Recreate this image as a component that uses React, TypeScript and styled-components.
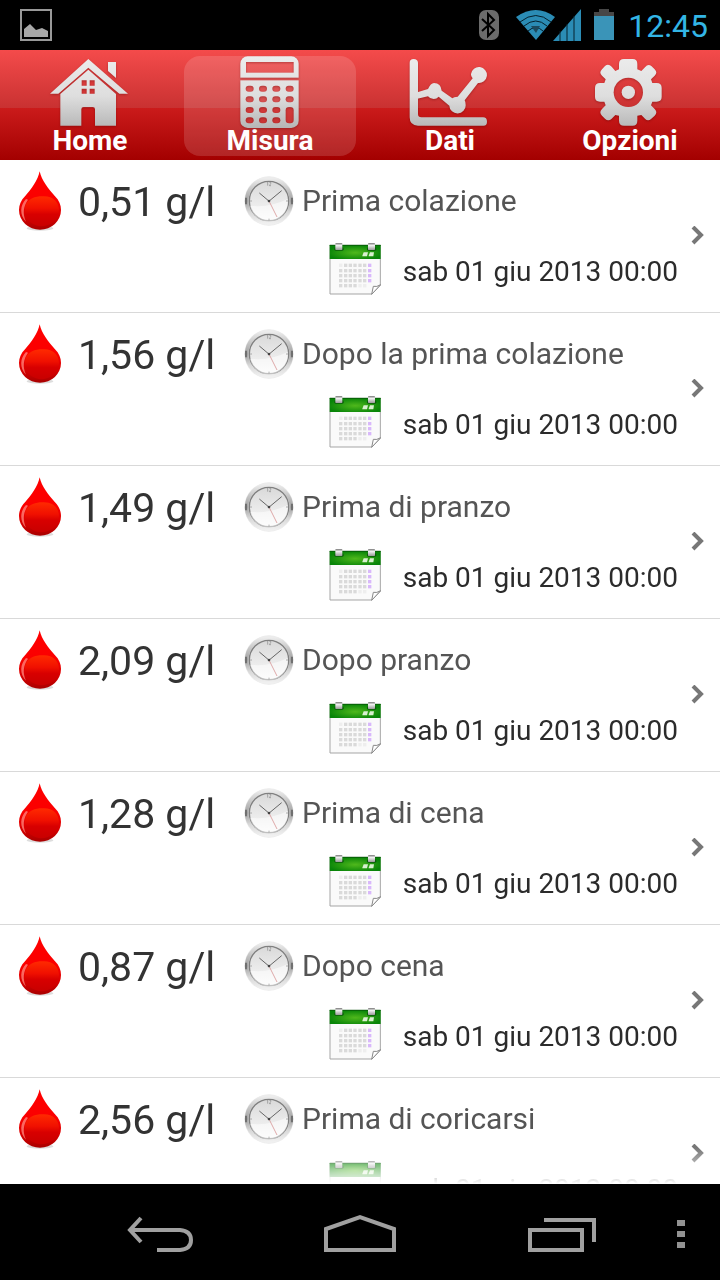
import React from 'react';
import styled, { createGlobalStyle } from 'styled-components';

const GlobalStyle = createGlobalStyle`
  * { box-sizing: border-box; }
  body {
    margin: 0;
    background: #fff;
    font-family: Roboto, "Liberation Sans", sans-serif;
  }
`;

const Screen = styled.div`
  display: flex;
  flex-direction: column;
  height: 100vh;
  background: #fff;
`;

const StatusBar = styled.header`
  flex: none;
  display: flex;
  align-items: center;
  height: 50px;
  padding: 0 12px 0 18px;
  background: #000;
`;

const StatusIcons = styled.div`
  display: flex;
  align-items: center;
  gap: 12px;
  margin-left: auto;
`;

const Time = styled.time`
  padding: 2px 0 0 2px;
  color: #33b5e5;
  font-size: 32px;
  line-height: 40px;
`;

const TabBar = styled.nav`
  flex: none;
  display: grid;
  grid-template-columns: repeat(4, 1fr);
  gap: 8px;
  padding: 6px 4px 4px;
  background:
    linear-gradient(to bottom, #f44b4b 0, #c93131 58px, #cb1b1b 58px, #a30000 100%);
`;

const Tab = styled.button<{ $active?: boolean }>`
  display: flex;
  flex-direction: column;
  align-items: center;
  padding: 0 0 2px;
  border: 0;
  border-radius: 16px;
  background: ${(p) => (p.$active ? 'rgba(255, 255, 255, 0.14)' : 'transparent')};
  color: #fff;
  font: 700 28px/26px Roboto, "Liberation Sans", sans-serif;
`;

const TabIcon = styled.svg`
  width: 84px;
  height: 72px;
  filter: drop-shadow(0 1px 1px rgba(80, 0, 0, 0.35));
`;

const List = styled.ul`
  flex: 1;
  min-height: 0;
  margin: 0;
  padding: 0;
  overflow-y: auto;
  scrollbar-width: none;
  list-style: none;
  mask-image: linear-gradient(to top, transparent 0, #000 36px);
`;

const Row = styled.a`
  display: flex;
  align-items: center;
  height: 153px;
  padding: 0 16px 0 18px;
  border-bottom: 1px solid #d9d9d9;
  color: #333;
  text-decoration: none;
`;

const Details = styled.div`
  flex: 1;
  display: flex;
  flex-direction: column;
  gap: 8px;
  padding-bottom: 2px;
`;

const Line = styled.div<{ $end?: boolean }>`
  display: flex;
  align-items: center;
  justify-content: ${(p) => (p.$end ? 'flex-end' : 'flex-start')};
  height: 60px;
  padding-right: ${(p) => (p.$end ? '12px' : '0')};
`;

const Value = styled.strong`
  width: 182px;
  padding: 2px 0 0 16px;
  font-size: 41px;
  font-weight: 400;
  line-height: 48px;
`;

const Meal = styled.span`
  padding-left: 8px;
  color: #555;
  font-size: 30px;
  line-height: 36px;
`;

const DateText = styled.time`
  padding: 6px 0 0 22px;
  color: #2b2b2b;
  font-size: 28px;
  line-height: 36px;
`;

const SystemBar = styled.footer`
  flex: none;
  display: flex;
  height: 96px;
  padding-left: 60px;
  background: #000;
`;

const SystemButton = styled.button<{ $narrow?: boolean }>`
  flex: ${(p) => (p.$narrow ? '0 0 60px' : '1')};
  display: flex;
  align-items: center;
  justify-content: center;
  padding: ${(p) => (p.$narrow ? '4px 18px 0 0' : '4px 0 0')};
  border: 0;
  background: none;
`;

const Sprite = styled.svg`
  position: absolute;
  width: 0;
  height: 0;
`;

const Paints = () => (
  <Sprite aria-hidden="true">
    <defs>
      <linearGradient id="metal" gradientUnits="userSpaceOnUse" x1="0" y1="170" x2="0" y2="384">
        <stop offset="0" stopColor="#ececec" />
        <stop offset="0.55" stopColor="#dedede" />
        <stop offset="1" stopColor="#b6b6b6" />
      </linearGradient>
      <linearGradient id="blood" x1="0" y1="0" x2="0" y2="1">
        <stop offset="0" stopColor="#f00" />
        <stop offset="0.5" stopColor="#fa0000" />
        <stop offset="0.8" stopColor="#d40000" />
        <stop offset="1" stopColor="#a80000" />
      </linearGradient>
      <linearGradient id="gloss" x1="0" y1="0" x2="0" y2="1">
        <stop offset="0" stopColor="#ff2a00" />
        <stop offset="0.4" stopColor="#f01000" />
        <stop offset="0.6" stopColor="#d80000" />
        <stop offset="1" stopColor="#c80000" />
      </linearGradient>
      <linearGradient id="rim" x1="0" y1="0" x2="0" y2="1">
        <stop offset="0" stopColor="#ececec" />
        <stop offset="0.25" stopColor="#c6c6c6" />
        <stop offset="0.5" stopColor="#a2a2a2" />
        <stop offset="0.75" stopColor="#d8d8d8" />
        <stop offset="1" stopColor="#f0f0f0" />
      </linearGradient>
      <linearGradient id="face" x1="0" y1="0" x2="0" y2="1">
        <stop offset="0" stopColor="#d9d9d9" />
        <stop offset="0.6" stopColor="#ececec" />
        <stop offset="1" stopColor="#fafafa" />
      </linearGradient>
      <radialGradient id="leaf" cx="0.5" cy="0.55" r="0.55">
        <stop offset="0" stopColor="#4fb81c" />
        <stop offset="1" stopColor="#088408" />
      </radialGradient>
      <linearGradient id="clip" x1="0" y1="0" x2="0" y2="1">
        <stop offset="0" stopColor="#777" />
        <stop offset="0.35" stopColor="#f0f0f0" />
        <stop offset="1" stopColor="#999" />
      </linearGradient>
    </defs>
  </Sprite>
);

const HomeIcon = () => (
  <TabIcon viewBox="144 168 252 216" fill="url(#metal)" aria-hidden="true">
    <path d="M265 177 384 281H358L265 203 175 281H150Z" />
    <path d="M324 186H348V234L324 213Z" />
    <path
      fillRule="evenodd"
      d="M265 209 348 282V377H285V328Q285 321 278 321H251Q244 321 244 328V377H181V282Z M245 241V257H260V241Z M269 241V257H284V241Z M245 266V281H260V266Z M269 266V281H284V266Z"
    />
  </TabIcon>
);

const CalculatorIcon = () => (
  <TabIcon viewBox="684 168 252 216" fill="url(#metal)" aria-hidden="true">
    <mask id="keys" maskUnits="userSpaceOnUse" x="684" y="168" width="252" height="216">
      <rect x="684" y="168" width="252" height="216" fill="#fff" />
      <g fill="#000">
        <rect x="738" y="186" width="143" height="32" />
        <rect x="718" y="233" width="182" height="8" />
        {[266, 298, 330, 361].map((y) =>
          [749, 789, 829, 869].map((x) =>
            x === 869 && y > 300 ? null : <rect key={`${x}-${y}`} x={x - 12} y={y - 9} width="24" height="18" rx="9" />,
          ),
        )}
        <rect x="857" y="321" width="24" height="49" rx="10" />
      </g>
    </mask>
    <rect x="721" y="169" width="175" height="215" rx="22" mask="url(#keys)" />
  </TabIcon>
);

const ChartIcon = () => (
  <TabIcon viewBox="144 168 252 216" fill="url(#metal)" aria-hidden="true">
    <path d="M149 188Q149 177 161 177T174 188V342Q174 352 184 352H369Q381 352 381 365T369 377H174Q149 377 149 352Z" />
    <path d="M172 277 204 267Q212 249 222 249 243 250 245 272L277 295Q281 291 293 290L338 235Q332 228 333 222A24 24 0 1 1 354 249L314 301Q317 306 317 315A24 24 0 0 1 268 317L236 290Q230 297 221 297 210 297 204 289L172 296Z" />
  </TabIcon>
);

const GearIcon = () => (
  <TabIcon viewBox="684 168 252 216" fill="url(#metal)" aria-hidden="true">
    <mask id="hub" maskUnits="userSpaceOnUse" x="684" y="168" width="252" height="216">
      <rect x="684" y="168" width="252" height="216" fill="#fff" />
      <circle cx="805" cy="277" r="44" fill="#000" />
    </mask>
    <path
      mask="url(#hub)"
      d="M777 192Q777 177 792 177H818Q832 177 832 192V208L844 213 855 202Q864 190 874 198L884 208Q894 218 884 227L873 238 877 249H890Q905 249 905 264V291Q905 305 890 305H877L873 316 884 327Q894 337 884 347L874 356Q864 366 855 356L844 345 832 347V362Q832 377 818 377H792Q777 377 777 362V347L766 345 755 356Q745 365 735 356L726 347Q716 337 726 327L737 316 733 305H720Q705 305 705 291V264Q705 249 720 249H733L737 238 726 227Q716 218 726 208L735 198Q745 189 755 200L766 213 777 208Z"
    />
    <circle cx="805" cy="277" r="20" />
  </TabIcon>
);

const PictureIcon = () => (
  <svg width="36" height="36" viewBox="0 0 36 36" aria-hidden="true">
    <rect x="3" y="3" width="30" height="30" fill="none" stroke="#999" strokeWidth="2" />
    <path d="M6 22 12 17 18 23 24 21 30 24V30H6Z" fill="#a8a8a8" />
  </svg>
);

const BluetoothIcon = () => (
  <svg width="26" height="32" viewBox="0 0 26 32" aria-hidden="true">
    <rect x="1" y="1" width="20" height="30" rx="7" fill="#6b6b6b" />
    <path d="M4 10 16 21 10 27V5L16 11 4 22" fill="none" stroke="#000" strokeWidth="2" />
  </svg>
);

const ConnectivityIcon = () => (
  <svg width="66" height="32" viewBox="0 0 66 32" aria-hidden="true">
    <path d="M0 8Q20 -6 39 8L20 31Z" fill="#2b8cb5" />
    <path d="M4 13Q20 0 35 13M8 17Q20 7 31 17M12 22Q20 15 27 22" fill="none" stroke="#04202c" strokeWidth="1" />
    <path d="M15 17H24L20 24Z" fill="#1c4a5e" />
    <path d="M37 32 65 0V32Z" fill="#2b8cb5" />
    <path d="M44 22V32M51 15V32M58 7V32" stroke="#06222e" strokeWidth="1" />
  </svg>
);

const BatteryIcon = () => (
  <svg width="20" height="32" viewBox="0 0 20 32" aria-hidden="true">
    <path d="M0 3H5V0H15V3H20V8H0Z" fill="#474747" />
    <rect y="7" width="20" height="24" fill="#3a94b8" />
  </svg>
);

const DropIcon = () => (
  <svg width="44" height="60" viewBox="54 32 132 180" aria-hidden="true">
    <ellipse cx="120" cy="204" rx="40" ry="7" fill="#ddd" />
    <path
      d="M119 33C124 60 147 87 165 108 177 120 183 134 183 149A63 59 0 0 1 57 149C57 134 63 120 75 108 93 87 114 60 119 33Z"
      fill="url(#blood)"
    />
    <path d="M76 135C86 113 108 107 132 108 160 108 177 126 177 149 176 180 152 197 122 198 92 194 70 175 76 135Z" fill="url(#gloss)" />
    <path d="M78 116C60 134 58 164 78 184 67 160 70 137 84 118Z" fill="#ff8a80" opacity="0.75" />
  </svg>
);

const ClockIcon = () => (
  <svg width="50" height="50" viewBox="42 29 150 150" aria-hidden="true">
    <circle cx="117" cy="104" r="74" fill="#ececec" />
    <circle cx="117" cy="104" r="67" fill="none" stroke="url(#rim)" strokeWidth="11" />
    <path d="M48 94V114M186 94V114" stroke="#666" strokeWidth="5" />
    <circle cx="117" cy="104" r="59" fill="url(#face)" stroke="#808080" strokeWidth="4" />
    <path d="M60 118Q117 125 173 98A57 57 0 0 1 60 118Z" fill="#fff" opacity="0.5" />
    <path d="M113 47V58M118 48Q124 46 122 52L118 58H123M60 104H66M168 104H174M117 157V162" fill="none" stroke="#888" strokeWidth="2" />
    <path d="M117 104 141 152" stroke="#d08080" strokeWidth="2" />
    <path d="M120 107 88 80M114 107 155 73" stroke="#666" strokeWidth="3" />
    <circle cx="117" cy="104" r="4" fill="#444" />
  </svg>
);

const CalendarIcon = () => (
  <svg width="52" height="54" viewBox="297 234 156 162" aria-hidden="true">
    <path d="M300 244H451V364L426 390H300Z" fill="#fafafa" stroke="#a5a5a5" strokeWidth="3" />
    <rect x="299" y="243" width="153" height="42" fill="url(#leaf)" />
    <path d="M299 244H452" stroke="#086008" strokeWidth="3" />
    <path d="M397 275 401 265H414L411 277H397ZM416 275 420 265H432L430 277H416Z" fill="#d9f0d0" />
    {[316, 414].map((x) => (
      <g key={x}>
        <rect x={x - 3} y="250" width="28" height="10" rx="4" fill="#0a5a0a" />
        <rect x={x} y="237" width="21" height="21" rx="2" fill="url(#clip)" />
      </g>
    ))}
    {[299, 315, 330, 345, 360].map((y, r) =>
      [327, 342, 356, 370, 385, 399, 414].map((x, c) => {
        if (r === 4 && c === 6) return null;
        const faint = (r === 0 && c === 0) || (r === 4 && c > 3);
        return <rect key={`${x}-${y}`} x={x} y={y} width="10" height="10" fill={c === 6 ? '#d9b8fb' : faint ? '#eee' : '#dadada'} />;
      }),
    )}
    <path d="M425 391 430 367Q440 370 452 362Z" fill="#fff" stroke="#888" strokeWidth="3" strokeLinejoin="round" />
  </svg>
);

const Chevron = () => (
  <svg width="14" height="20" viewBox="0 0 14 20" aria-hidden="true">
    <path d="M3 1 11 9 3 17" fill="none" stroke="#777" strokeWidth="4" />
  </svg>
);

const tabs = [
  { label: 'Home', Icon: HomeIcon },
  { label: 'Misura', Icon: CalculatorIcon },
  { label: 'Dati', Icon: ChartIcon },
  { label: 'Opzioni', Icon: GearIcon },
];

const readings = [
  { value: '0,51', meal: 'Prima colazione' },
  { value: '1,56', meal: 'Dopo la prima colazione' },
  { value: '1,49', meal: 'Prima di pranzo' },
  { value: '2,09', meal: 'Dopo pranzo' },
  { value: '1,28', meal: 'Prima di cena' },
  { value: '0,87', meal: 'Dopo cena' },
  { value: '2,56', meal: 'Prima di coricarsi' },
];

export default function App() {
  return (
    <Screen>
      <GlobalStyle />
      <Paints />
      <StatusBar>
        <PictureIcon />
        <StatusIcons>
          <BluetoothIcon />
          <ConnectivityIcon />
          <BatteryIcon />
          <Time>12:45</Time>
        </StatusIcons>
      </StatusBar>
      <TabBar>
        {tabs.map(({ label, Icon }) => (
          <Tab key={label} type="button" $active={label === 'Misura'}>
            <Icon />
            {label}
          </Tab>
        ))}
      </TabBar>
      <List>
        {readings.map(({ value, meal }) => (
          <li key={meal}>
            <Row href="#">
              <Details>
                <Line>
                  <DropIcon />
                  <Value>{value} g/l</Value>
                  <ClockIcon />
                  <Meal>{meal}</Meal>
                </Line>
                <Line $end>
                  <CalendarIcon />
                  <DateText dateTime="2013-06-01T00:00">sab 01 giu 2013 00:00</DateText>
                </Line>
              </Details>
              <Chevron />
            </Row>
          </li>
        ))}
      </List>
      <SystemBar>
        <SystemButton type="button" aria-label="Indietro">
          <svg width="68" height="40" viewBox="0 0 68 40" fill="none" stroke="#a0a0a0" strokeWidth="4">
            <path d="M4 16H54Q65 17 65 26T54 36H31" />
            <path d="M15 4 4 16 15 28" />
          </svg>
        </SystemButton>
        <SystemButton type="button" aria-label="Home">
          <svg width="72" height="40" viewBox="0 0 72 40" fill="none" stroke="#a0a0a0" strokeWidth="4">
            <path d="M2 15 36 3 70 15V36H2Z" />
          </svg>
        </SystemButton>
        <SystemButton type="button" aria-label="Recenti">
          <svg width="72" height="40" viewBox="-4 0 72 40" fill="none" stroke="#a0a0a0" strokeWidth="4">
            <path d="M2 16H54V36H2ZM16 6H66V28" />
          </svg>
        </SystemButton>
        <SystemButton type="button" aria-label="Menu" $narrow>
          <svg width="8" height="30" viewBox="0 0 8 30" fill="#929292">
            <path d="M0 1H8V7H0ZM0 12H8V18H0ZM0 23H8V29H0Z" />
          </svg>
        </SystemButton>
      </SystemBar>
    </Screen>
  );
}
